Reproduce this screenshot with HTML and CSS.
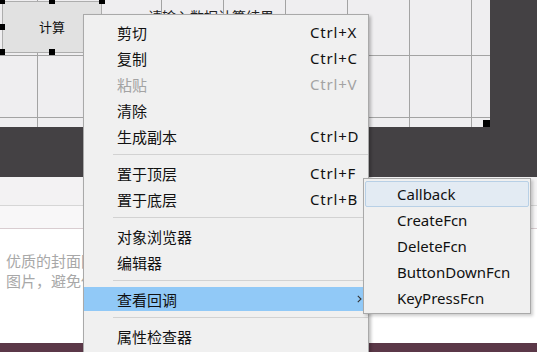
FILE: index.html
```html
<!DOCTYPE html>
<html lang="zh-CN">
<head>
    <meta charset="UTF-8">
    <meta name="viewport" content="width=device-width, initial-scale=1.0">
    <title>GUIDE 右键菜单</title>
    <link rel="stylesheet" href="styles.css">
</head>
<body>
    <!-- GUIDE layout area -->
    <div class="workspace">
        <div class="canvas">
            <div class="gui-text">请输入数据计算结果</div>
            <div class="gui-btn">计算</div>
            <span class="handle h-tl"></span>
            <span class="handle h-tm"></span>
            <span class="handle h-tr"></span>
            <span class="handle h-ml"></span>
            <span class="handle h-mr"></span>
            <span class="handle h-bl"></span>
            <span class="handle h-bm"></span>
            <span class="handle h-br"></span>
            <span class="resize-grip"></span>
        </div>
    </div>

    <!-- Article editor behind -->
    <div class="page">
        <div class="page-bar"></div>
        <div class="page-tabs"></div>
        <div class="page-body">
            <div class="hint-col">
                <p class="hint">优质的封面图片能吸引更多读者阅读</p>
                <p class="hint">图片，避免使用模糊或变形的图片</p>
            </div>
        </div>
        <div class="page-footer"></div>
    </div>

    <!-- Context menu -->
    <div class="context-menu">
        <div class="menu-item"><span class="label">剪切</span><span class="key">Ctrl+X</span></div>
        <div class="menu-item"><span class="label">复制</span><span class="key">Ctrl+C</span></div>
        <div class="menu-item disabled"><span class="label">粘贴</span><span class="key">Ctrl+V</span></div>
        <div class="menu-item"><span class="label">清除</span></div>
        <div class="menu-item"><span class="label">生成副本</span><span class="key">Ctrl+D</span></div>
        <div class="menu-sep"></div>
        <div class="menu-item"><span class="label">置于顶层</span><span class="key">Ctrl+F</span></div>
        <div class="menu-item"><span class="label">置于底层</span><span class="key">Ctrl+B</span></div>
        <div class="menu-sep"></div>
        <div class="menu-item"><span class="label">对象浏览器</span></div>
        <div class="menu-item"><span class="label">编辑器</span></div>
        <div class="menu-sep"></div>
        <div class="menu-item active">
            <span class="label">查看回调</span>
            <span class="key"></span>
            <svg class="arrow" width="5" height="8" viewBox="0 0 5 8"><path d="M0.8 0.8 L4 4 L0.8 7.2" fill="none" stroke="#333" stroke-width="1.1"/></svg>
        </div>
        <div class="menu-sep"></div>
        <div class="menu-item"><span class="label">属性检查器</span></div>
    </div>

    <!-- Submenu -->
    <div class="submenu">
        <div class="sub-item hover">Callback</div>
        <div class="sub-item">CreateFcn</div>
        <div class="sub-item">DeleteFcn</div>
        <div class="sub-item">ButtonDownFcn</div>
        <div class="sub-item">KeyPressFcn</div>
    </div>
</body>
</html>
```

FILE: styles.css
```css
* {
    box-sizing: border-box;
}

body {
    margin: 0;
    width: 537px;
    height: 352px;
    overflow: hidden;
    position: relative;
    font-family: "Noto Sans", "Noto Sans CJK SC", sans-serif;
    background: #fff;
}

/* GUIDE workspace */
.workspace {
    height: 177px;
    background: #444144;
}

.canvas {
    position: relative;
    width: 490px;
    height: 127px;
    background-color: #efeef0;
    background-image:
        linear-gradient(to right, #a3a3a3 1px, transparent 1px),
        linear-gradient(to bottom, #a3a3a3 1px, transparent 1px);
    background-size: 62px 62px;
    background-position: 37px 55px;
}

/* label mostly hidden under the menu, only the tops show */
.gui-text {
    position: absolute;
    left: 148px;
    top: 10px;
    height: 4px;
    overflow: hidden;
    font-size: 14px;
    line-height: 14px;
    color: #222;
    white-space: nowrap;
}

.gui-btn {
    position: absolute;
    left: 2px;
    top: 1px;
    width: 100px;
    height: 52px;
    padding-bottom: 2px;
    background: #e1e1e1;
    border: 1px solid #adadad;
    display: flex;
    align-items: center;
    justify-content: center;
    font-size: 13px;
    color: #111;
}

.handle {
    position: absolute;
    width: 6px;
    height: 6px;
    background: #000;
}

.h-tl { left: -1px; top: -2px; }
.h-tm { left: 49px; top: -2px; }
.h-tr { left: 99px; top: -2px; }
.h-ml { left: -1px; top: 24px; }
.h-mr { left: 99px; top: 24px; }
.h-bl { left: -1px; top: 49px; }
.h-bm { left: 49px; top: 49px; }
.h-br { left: 99px; top: 49px; }

.resize-grip {
    position: absolute;
    right: 0;
    bottom: 0;
    width: 7px;
    height: 7px;
    background: #000;
}

/* page behind the menu */
.page-bar {
    height: 29px;
    background: #f3f2f3;
    border-bottom: 1px solid #d6d6d6;
}

.page-tabs {
    height: 23px;
    background: #f8f7f8;
    border-bottom: 1px solid #d9cdd1;
}

.page-body {
    height: 114px;
    padding: 22px 6px 0;
}

.hint-col {
    width: 77px;
    overflow: hidden;
}

.hint {
    margin: 0;
    font-size: 15px;
    line-height: 20px;
    color: #a8a8a8;
    white-space: nowrap;
}

.page-footer {
    height: 20px;
    background: #5b3848;
}

/* context menu */
.context-menu {
    position: absolute;
    left: 83px;
    top: 14px;
    width: 286px;
    padding: 4px 0;
    background: #f0f0f0;
    border: 1px solid #a9a9a9;
    box-shadow: 2px 2px 3px rgba(0, 0, 0, 0.25);
    font-size: 15px;
    color: #111;
}

.menu-item {
    display: flex;
    align-items: center;
    height: 26px;
    padding-left: 33px;
    border-top: 1px solid transparent;
    border-bottom: 1px solid transparent;
}

.menu-item .label {
    flex: none;
    width: 193px;
}

.menu-item .key {
    flex: 1;
    letter-spacing: 0.8px;
}

.menu-item.disabled {
    color: #a3a3a3;
}

.menu-item.active {
    background: #91c9f7;
    background-clip: padding-box;
}

.arrow {
    flex: none;
    margin-right: 6px;
}

.menu-sep {
    margin: 5px 0 5px 29px;
    border-top: 1px solid #d2d2d2;
}

/* submenu */
.submenu {
    position: absolute;
    left: 363px;
    top: 178px;
    width: 168px;
    padding: 2px 0;
    background: #f0f0f0;
    border: 1px solid #a9a9a9;
    box-shadow: 2px 2px 3px rgba(0, 0, 0, 0.2);
    font-size: 15px;
    color: #111;
}

.sub-item {
    display: flex;
    align-items: center;
    height: 26px;
    margin: 0 1px;
    padding-left: 31px;
    border: 1px solid transparent;
    border-radius: 2px;
}

.sub-item.hover {
    background: #e3ebf3;
    border-color: #b8d0e6;
}
```
